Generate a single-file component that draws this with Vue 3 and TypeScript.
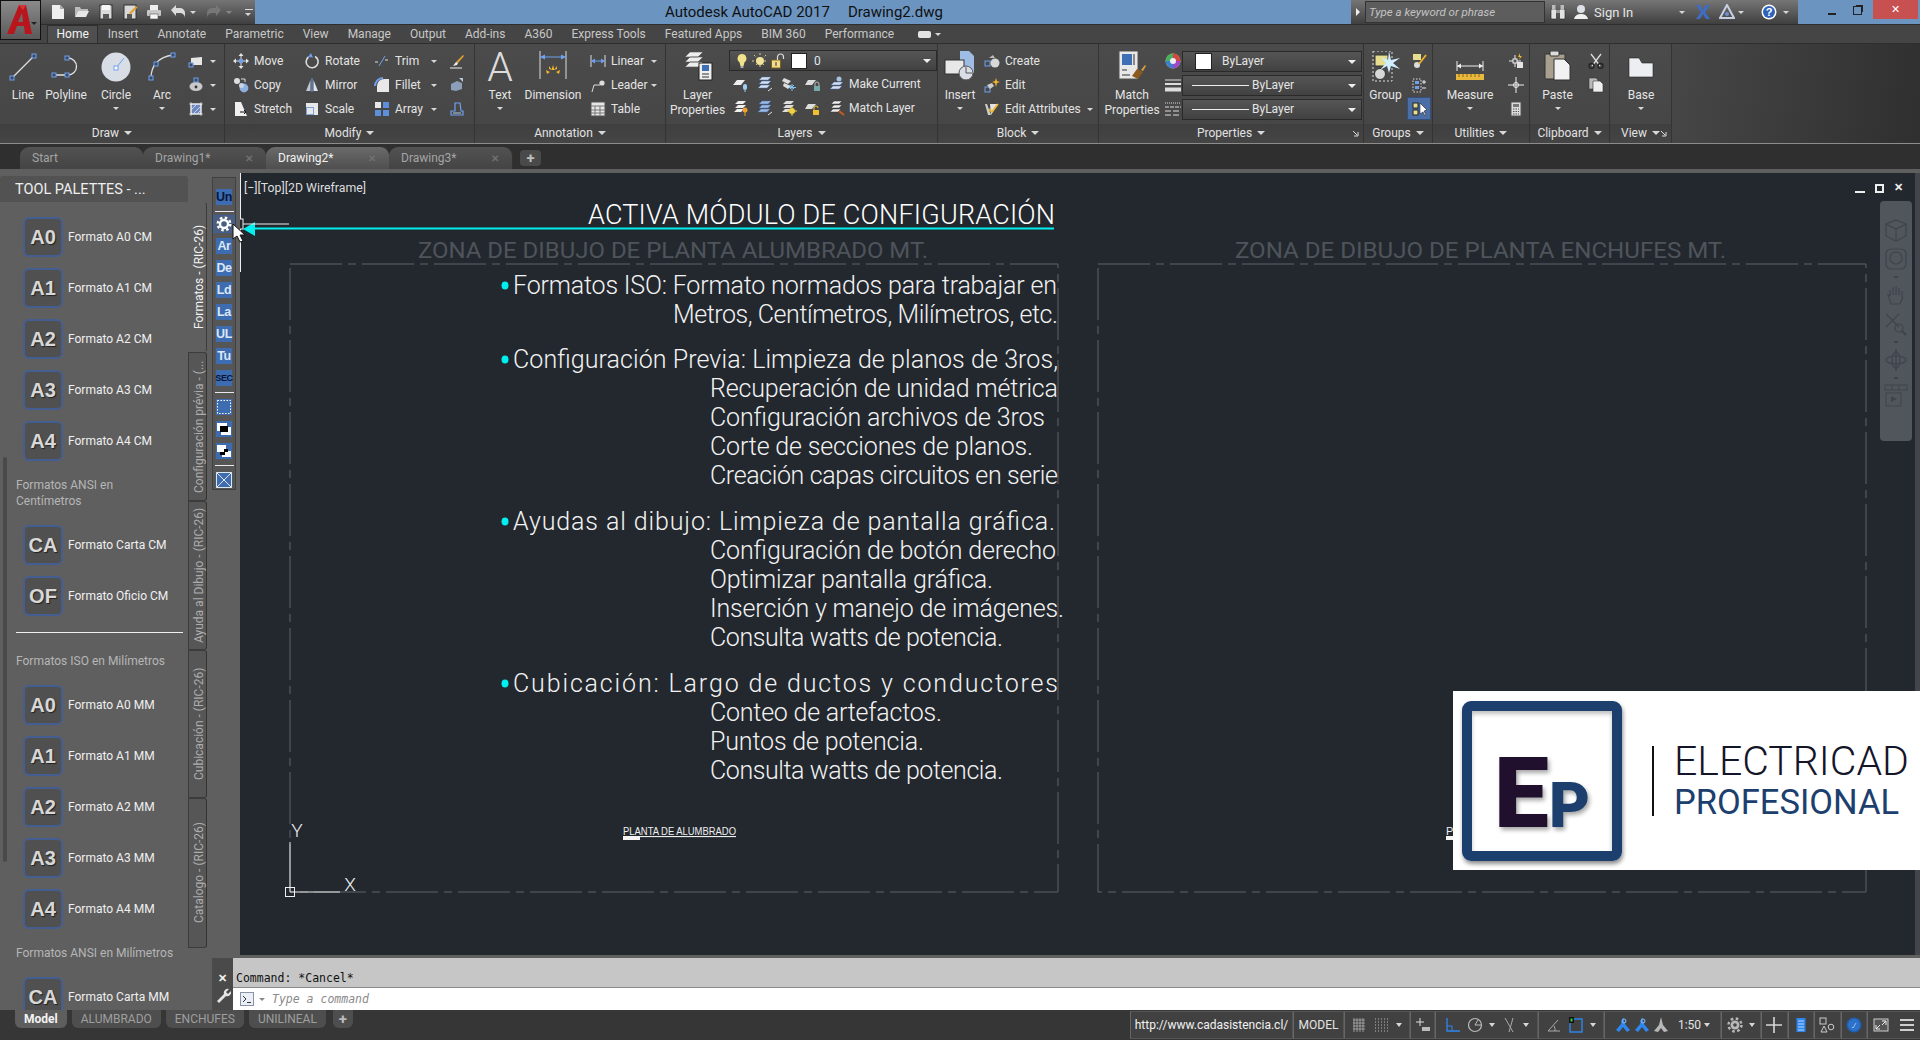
<script setup lang="ts">
import { h } from 'vue'

const grip = (x: number, y: number) =>
  `<rect x="${x - 2}" y="${y - 2}" width="4" height="4" fill="#3b4a63" stroke="#6fa0f0"/>`

// icon bodies, drawn in pixels: viewBox is always 0 0 s s
const icons: Record<string, string> = {
  line: `<path d="M5 27L27 5" stroke="#ddd" stroke-width="1.2"/>${grip(5, 27)}${grip(27, 5)}`,
  polyline: `<path d="M4 24H18A8.5 8.5 0 0 0 18 7" stroke="#e2e2e2" stroke-width="1.3"/>${grip(4, 24)}${grip(17, 24)}${grip(17, 7)}`,
  circle: `<circle cx="16" cy="16" r="14.5" fill="#d9dde6"/><path d="M16 17L24 7" stroke="#6fa0f0"/><rect x="14" y="15" width="4" height="4" fill="#fff" stroke="#6fa0f0"/>`,
  arc: `<path d="M5 27C5 15 12 6 27 4" stroke="#ddd" stroke-width="1.3"/>${grip(5, 27)}${grip(10, 13)}${grip(27, 4)}`,
  rect: `<path d="M3 5l11-1v8H3z" fill="#e6e6e6"/>${grip(3, 12)}`,
  ellipse: `<ellipse cx="8" cy="9.5" rx="6.5" ry="4.5" fill="#c9c9c9"/><circle cx="8" cy="10" r="1.4" fill="#333"/>${grip(8, 3)}`,
  hatch: `<rect x="3" y="3" width="10" height="10" fill="#6f87bd" stroke="#fff"/><path d="M3 9l6-6M5 13l8-8M9 13l4-4" stroke="#c7d3ee"/><path d="M1 3h14M1 13h14M3 1v14M13 1v14" stroke="#fff" stroke-width=".6"/>`,
  move: `<path d="M8 1.5v13M1.5 8h13" stroke="#ddd"/><path d="M8 0l2.5 3h-5zM8 16l2.5-3h-5zM0 8l3-2.5v5zM16 8l-3-2.5v5z" fill="#e6e6e6"/><rect x="6" y="6" width="4" height="4" fill="#6fa0f0"/>`,
  copy: `<circle cx="4" cy="4" r="3" fill="#ddd"/><path d="M8 2h4v3" stroke="#ddd"/><circle cx="11" cy="11" r="4.4" fill="#8fb0de"/><circle cx="8.5" cy="8.5" r="2.5" fill="#c9d4e6"/>`,
  rotate: `<path d="M4.5 4A6 6 0 1 0 11 3.5" stroke="#ddd" stroke-width="1.6"/><path d="M7 0L9 4.5 4 4z" fill="#6fa0f0"/>`,
  mirror: `<path d="M6.5 3v11H2z" fill="#bfc7d4"/><path d="M9.5 3v11H14z" fill="#dfe4ec"/><path d="M8 1v14" stroke="#6fa0f0"/>`,
  stretch: `<path d="M2 1h6l6 14H2z" fill="#f0f0f0"/><path d="M7 11h6M11 9l2 2-2 2" stroke="#111"/>`,
  scale: `<rect x="2" y="2" width="12" height="12" fill="#e8e8e8"/><rect x="2" y="6" width="8" height="8" fill="#7ea2d8"/><rect x="3" y="7" width="6" height="6" fill="#e8e8e8"/>`,
  trim: `<path d="M1 9h4M11 7h4" stroke="#ddd" stroke-dasharray="3 1"/><path d="M5 13L11 3" stroke="#6fa0f0"/>`,
  fillet: `<path d="M3 15V9a7 7 0 0 1 7-7h5v13z" fill="#e8e8e8"/><path d="M1 9a8 8 0 0 1 8-8" stroke="#6fa0f0" stroke-width="2"/>`,
  array: `<rect x="1" y="1" width="6" height="6" fill="#e8e8e8"/><rect x="9" y="1" width="6" height="6" fill="#5d90dc"/><rect x="1" y="9" width="6" height="6" fill="#5d90dc"/><rect x="9" y="9" width="6" height="6" fill="#5d90dc"/>`,
  erase: `<path d="M14 2L7 9l2 1 6-7z" fill="#e3a12f"/><path d="M7 9l-3 4 4-1 1-2z" fill="#efefef"/><path d="M1 15h12" stroke="#eee"/>`,
  explode: `<path d="M2 7l6-3 5 2-6 3zM2 7v6l5 1V9zM7 9l6-3v6l-6 2z" fill="#8c9fb8"/><path d="M10 1h4v4" fill="#bcc8d8"/>`,
  offset: `<path d="M2 14V10H6V2h5l1 8h2v4z" stroke="#6fa0f0" stroke-width="1.2"/><path d="M4 12h8" stroke="#bcd"/>`,
  dim: `<path d="M3 0v28M29 0v28" stroke="#ddd"/><path d="M3 6h26" stroke="#6fa0f0"/><path d="M3 6l5-2.5v5zM29 6l-5-2.5v5z" fill="#6fa0f0"/><path d="M16 14l1.5 5h-3zM9 19l4 2-3 2zM23 19l-4 2 3 2zM12 15l3 4-3-1zM20 15l-3 4 3-1z" fill="#f0b429"/>`,
  linear: `<path d="M1 2v12M15 2v12" stroke="#ddd"/><path d="M1 8h14" stroke="#6fa0f0"/><path d="M1 8l4-2.5v5zM15 8l-4-2.5v5z" fill="#6fa0f0"/>`,
  leader: `<path d="M2 15l2-7h6" stroke="#ddd"/><circle cx="12" cy="6" r="2.6" fill="#ddd"/>`,
  table: `<rect x="1" y="1" width="14" height="14" fill="#e6e6e6" stroke="#555"/><path d="M1 5h14M1 9h14M1 12h14M5 5v10M10 5v10" stroke="#777"/>`,
  layerprops: `<path d="M8 1l13 0-5 5H3zM8 6h13l-5 5H3zM8 11h13l-5 5H3z" fill="#eee" stroke="#555" stroke-width=".6"/><rect x="17" y="12" width="13" height="17" fill="#eee" stroke="#222"/><rect x="20" y="14" width="7" height="6" fill="#3e6eb4"/><path d="M20 23h7M20 26h7" stroke="#333"/>`,
  bulb: `<path d="M8 1a4.5 4.5 0 0 0-2.5 8.2L6.5 13h3l1-3.800A4.500 4.500 0 0 0 8 1z" fill="#f2e28a"/><rect x="6.500" y="13" width="3" height="2" fill="#aaa"/>`,
  sun: `<circle cx="8" cy="8" r="4" fill="#f3e39a"/><path d="M8 0v16M0 8h16M2 2l12 12M14 2L2 14" stroke="#d7cc8f" stroke-dasharray="2 10"/>`,
  lockopen: `<rect x="1.500" y="7" width="9" height="8" fill="#f3dd8a" stroke="#7a6520"/><path d="M7.500 7V4a3 3 0 0 1 6 0v2" stroke="#ddd" stroke-width="1.2"/><path d="M6 9v4" stroke="#333"/>`,
  lay1: `<path d="M4 4h8L8 9H0z" fill="#eee"/><rect x="10" y="8" width="4" height="6" rx="2" fill="#9fd0f2"/><path d="M12 14v2" stroke="#9fd0f2"/>`,
  lay2: `<path d="M5 1h9l-3 3H2zM5 5h9l-3 3H2zM4 9h9l-3 3H1z" fill="#d8deea" stroke="#3e6eb4" stroke-width=".5"/><path d="M15 12l-4 3" stroke="#ddd"/>`,
  lay3: `<path d="M3 2l7 3-3 3-6-3zM3 7l7 3-3 3-5-3z" fill="#ddd"/><path d="M11 8v7M8 11.500h7M9 9l4 4M13 9l-4 4" stroke="#7fc4f2"/>`,
  lay4: `<path d="M3 4h8L7 9H0z" fill="#ddd"/><rect x="9" y="10" width="6" height="5" fill="#7aa"/><path d="M10 10V8a2 2 0 0 1 4 0v2" stroke="#bbb"/>`,
  lay5: `<circle cx="10" cy="3" r="2.500" fill="#a9c1e2"/><path d="M5 6h9l-3 3H2zM4 10h9l-3 3H1z" fill="#d8deea" stroke="#3e6eb4" stroke-width=".5"/>`,
  lay6: `<path d="M5 1h8l-3 3H2zM5 5h8l-3 3H2zM4 9h7l-3 3H1z" fill="#eee"/><circle cx="12" cy="10" r="2.500" fill="#f0a030"/><path d="M12 12v4" stroke="#f0a030"/>`,
  lay7: `<path d="M5 1h9l-3 3H2zM5 5h9l-3 3H2zM4 9h9l-3 3H1z" fill="#9db8e0" stroke="#3e6eb4" stroke-width=".5"/><path d="M11 15l4-3" stroke="#ddd"/>`,
  lay8: `<path d="M5 1h8l-3 3H2zM5 5h8l-3 3H2zM4 9h6l-3 3H1z" fill="#ddd"/><circle cx="11" cy="11" r="3" fill="#f0d040"/><path d="M11 6v10M6 11h10" stroke="#f0d040"/>`,
  lay9: `<path d="M3 4h8L7 9H0z" fill="#ddd"/><rect x="8" y="10" width="6" height="5" fill="#f0c030"/><path d="M9 10V8a2 2 0 0 1 4 0" stroke="#f0c030"/>`,
  lay10: `<path d="M5 1h8l-3 3H2zM5 5h8l-3 3H2zM4 9h8l-3 3H1z" fill="#eee" stroke="#333" stroke-width=".5"/><path d="M10 11l5 4" stroke="#c85a20" stroke-width="2"/>`,
  insert: `<path d="M16 0h9l5 5v17H16z" fill="#9fbce4"/><rect x="1" y="9" width="19" height="14" fill="#e8e8e8" stroke="#333"/><circle cx="22" cy="22" r="7" fill="#d9dde6" stroke="#555"/><path d="M22 22v-6M22 22h6" stroke="#555"/>`,
  create: `<rect x="1" y="8" width="5" height="5" fill="none" stroke="#6fa0f0"/><path d="M5 5l4-3 2 3z" fill="#bbb"/><circle cx="11" cy="10" r="4.500" fill="#d7d7d7"/>`,
  edit: `<rect x="1" y="10" width="5" height="5" fill="none" stroke="#6fa0f0"/><path d="M3 8l5-2 2 3-4 3z" fill="#ccc"/><path d="M12 1l1 3 3 1-3 1-1 4-1-4-3-1 3-1z" fill="#f0b429"/>`,
  attr: `<path d="M1 3l3 11h3L3 3z" fill="#ccc"/><path d="M6 3h8L7 14z" fill="#e4e4e4"/><path d="M5 8l3 3 6-8" stroke="#f0b429" stroke-width="1.800"/>`,
  match: `<rect x="3" y="0" width="19" height="28" fill="#e8e8e8" stroke="#555"/><rect x="6" y="3" width="10" height="11" fill="#3e6eb4"/><path d="M18 3v11" stroke="#888" stroke-width="2"/><path d="M6 19h5M6 24h8" stroke="#333"/><path d="M16 25l5-7 6 3-5 7z" fill="#8a5a20"/><path d="M25 19l4-5 1 1-3 5z" fill="#d8a040"/>`,
  color: `<circle cx="8" cy="8" r="7.500" fill="#c9c94a"/><path d="M8 8V.5A7.500 7.500 0 0 1 15.500 8z" fill="#d64545"/><path d="M8 8h7.500A7.500 7.500 0 0 1 8 15.500z" fill="#9a4ac9"/><path d="M8 8v7.500A7.500 7.500 0 0 1 .5 8z" fill="#3f7fd0"/><path d="M8 8H.5A7.500 7.500 0 0 1 8 .5z" fill="#48b060"/><circle cx="8" cy="8" r="3" fill="#eee"/>`,
  lweight: `<path d="M0 3h16" stroke="#ddd"/><path d="M0 7h16" stroke="#ddd" stroke-width="2"/><path d="M0 12.500h16" stroke="#ddd" stroke-width="4"/>`,
  ltype: `<path d="M0 2h16" stroke="#ddd" stroke-dasharray="1 1"/><path d="M0 6h16" stroke="#ddd" stroke-dasharray="4 1"/><path d="M0 10h16M0 14h16" stroke="#ddd" stroke-dasharray="6 2"/>`,
  group: `<rect x="3" y="0" width="19" height="30" fill="none" stroke="#ddd" stroke-dasharray="2 2"/><rect x="5" y="4" width="13" height="11" fill="#e7dd8e" stroke="#333"/><circle cx="10" cy="23" r="5.500" fill="#d7d7d7" stroke="#333"/><path d="M19 0l2 9 9-2-7 5 7 6-9-3-2 7-2-7-7 4 6-7-5-6 7 3z" fill="#cfeeff"/>`,
  grpedit: `<rect x="2" y="1" width="8" height="6" fill="#e7dd8e"/><circle cx="6" cy="12" r="3" fill="#ddd"/><path d="M8 11l7-9" stroke="#f0b429" stroke-width="1.800"/>`,
  grpadd: `<rect x="2" y="2" width="8" height="13" fill="none" stroke="#ddd" stroke-dasharray="1.500 1.500"/><rect x="4" y="4" width="4" height="3" fill="#6fa0f0"/><rect x="4" y="9" width="4" height="3" fill="#6fa0f0"/><path d="M11 5h4M13 3v4M11 11h4" stroke="#eee"/>`,
  grpsel: `<rect x="2" y="2" width="5" height="5" fill="#e7dd8e" stroke="#222"/><rect x="2" y="9" width="5" height="5" fill="#e7dd8e" stroke="#222"/><path d="M9 2v11l3-2 2 4 1-1-2-4 3-1z" fill="#fff" stroke="#222" stroke-width=".6"/>`,
  measure: `<g transform="translate(0 4)"><path d="M3 6v10M29 6v10" stroke="#eee"/><path d="M3 11h26" stroke="#eee"/><path d="M3 11l4-2.500v5zM29 11l-4-2.500v5z" fill="#eee"/><rect x="2" y="19" width="28" height="6" fill="#e8b93c"/><path d="M5 19v3M9 19v3M13 19v3M17 19v3M21 19v3M25 19v3" stroke="#8a6a1a"/></g>`,
  idpoint: `<path d="M7 2v12M1 8h12" stroke="#eee"/><rect x="5" y="6" width="4" height="4" fill="#555" stroke="#eee"/><path d="M12 0l-2 4h2l-1 3 3-4h-2z" fill="#f0b429"/><rect x="9" y="9" width="6" height="6" fill="#e4e4e4"/>`,
  cross: `<path d="M8 0v16M0 8h16" stroke="#eee"/><circle cx="8" cy="8" r="2.500" stroke="#eee"/>`,
  calc: `<rect x="3" y="1" width="10" height="14" fill="#ddd" stroke="#555"/><rect x="5" y="3" width="6" height="3" fill="#777"/><path d="M5 8h6M5 10.500h6M5 13h6" stroke="#555" stroke-dasharray="1.500 1"/>`,
  paste: `<rect x="3" y="3" width="20" height="25" rx="1" fill="#a89f8f" stroke="#333"/><rect x="8" y="0" width="9" height="5" rx="1" fill="#ddd" stroke="#333"/><path d="M12 8h10l6 6v15H12z" fill="#f2f2f2" stroke="#333"/>`,
  cut: `<path d="M3 1l9 12M13 1L4 13" stroke="#ddd" stroke-width="1.300"/><circle cx="3.500" cy="13" r="2.500" stroke="#222" stroke-width="1.300"/><circle cx="12.500" cy="13" r="2.500" stroke="#222" stroke-width="1.300"/>`,
  clipcopy: `<path d="M1 1h7l2 2v9H1z" fill="#bbb" stroke="#333" stroke-width=".6"/><path d="M5 4h7l3 3v8H5z" fill="#eee" stroke="#333" stroke-width=".6"/>`,
  base: `<path d="M4 7h10l3 5h11v14H4z" fill="#eceef2" stroke="#222" stroke-width=".6"/>`,
  newf: `<path d="M2 1h8l4 4v10H2z" fill="#eee"/><path d="M10 1v4h4" fill="#aaa"/>`,
  open: `<path d="M1 13V3h5l1 2h7v2H4z" fill="#bbb"/><path d="M1 13l3-6h11l-3 6z" fill="#e6e6e6"/>`,
  save: `<rect x="2" y="1" width="12" height="14" fill="#d9d9d9" stroke="#333"/><rect x="4" y="1" width="8" height="5" fill="#f7f7f7"/><rect x="5" y="10" width="6" height="5" fill="#555"/>`,
  saveas: `<rect x="2" y="1" width="12" height="14" fill="#d9d9d9" stroke="#333"/><rect x="5" y="10" width="5" height="5" fill="#555"/><path d="M7 9l7-7 1.500 1.500-7 7z" fill="#e3a12f"/>`,
  print: `<rect x="4" y="1" width="8" height="5" fill="#eee"/><rect x="1" y="6" width="14" height="6" rx="1" fill="#c9c9c9"/><rect x="4" y="10" width="8" height="5" fill="#f5f5f5" stroke="#555" stroke-width=".6"/>`,
  undo: `<path d="M1 6l5-5v3h4a5 5 0 0 1 5 5v5a5 5 0 0 0-5-5H6v3z" fill="#dcdcdc"/>`,
  redo: `<path d="M15 6l-5-5v3H6a5 5 0 0 0-5 5v5a5 5 0 0 1 5-5h4v3z" fill="#777"/>`,
  binoc: `<rect x="1" y="5" width="5.500" height="10" rx="1" fill="#e2e2e2" stroke="#222" stroke-width=".6"/><rect x="9.500" y="5" width="5.500" height="10" rx="1" fill="#e2e2e2" stroke="#222" stroke-width=".6"/><rect x="2" y="1" width="3.500" height="4" fill="#bbb"/><rect x="10.500" y="1" width="3.500" height="4" fill="#bbb"/><rect x="6" y="6" width="4" height="3" fill="#999"/>`,
  user: `<circle cx="8" cy="5" r="4" fill="#dde0e6"/><path d="M1 15c1-4 4-5 7-5s6 1 7 5z" fill="#f0f0f0"/>`,
  xlogo: `<path d="M1 1h4l3 5 3-5h4l-5 7 5 7h-4l-3-5-3 5H1l5-7z" fill="#3f6cc4"/>`,
  a360: `<path d="M8 1L1 14h14z" stroke="#c6d0e2" stroke-width="2"/><circle cx="8" cy="10" r="2" fill="#6f8fd0"/>`,
  help: `<circle cx="8" cy="8" r="7.500" fill="#fff"/><circle cx="8" cy="8" r="6" fill="#2f63b8"/><text x="8" y="12" text-anchor="middle" font-family="Liberation Sans" font-size="11" font-weight="700" fill="#fff">?</text>`,
  grid: `<path d="M2 1v14M5 1v14M8 1v14M11 1v14M1 3h12M1 6h12M1 9h12M1 12h12" stroke="#bbb" stroke-width=".7"/>`,
  snap: `<path d="M1 2h14M1 5h14M1 8h14M1 11h14M1 14h14" stroke="#bbb" stroke-dasharray="1 2"/>`,
  dyn: `<path d="M5 1v8M1 5h8" stroke="#ddd"/><rect x="7" y="10" width="8" height="4" fill="#bbb"/>`,
  ortho: `<path d="M2 1v13h13" stroke="#2e86ee" stroke-width="1.300"/><path d="M2 9h5v5" stroke="#2e86ee"/>`,
  polar: `<circle cx="8" cy="8" r="6.500" stroke="#bbb" stroke-width="1.200"/><path d="M8 8h7M8 8l3-5" stroke="#bbb"/>`,
  iso: `<path d="M4 1l8 14M12 1L8 15" stroke="#aaa"/>`,
  osnap: `<path d="M2 14L12 3M2 14h12" stroke="#aaa"/><path d="M9 14a7 7 0 0 0-1-5" stroke="#aaa"/>`,
  dwg: `<rect x="2" y="2" width="12" height="13" stroke="#2e86ee" stroke-width="1.400"/><rect x="1" y="0" width="5" height="6" fill="#111"/><rect x="2.500" y="1.500" width="2" height="3" fill="#35d04a"/>`,
  anno: `<path d="M8 0L6 7 1 13l3 2 4-5 4 5 3-2-5-6z" fill="#2e86ee"/><circle cx="9" cy="4" r="2" stroke="#8cc0ff"/>`,
  annog: `<path d="M8 0L6 8 1 14l4 1 3-4 3 4 4-1-5-6z" fill="#b8b8b8"/>`,
  gear: `<circle cx="8" cy="8" r="4.500" fill="#b8b8b8"/><circle cx="8" cy="8" r="6.500" stroke="#b8b8b8" stroke-width="2.400" stroke-dasharray="2.600 2.500"/><circle cx="8" cy="8" r="1.800" fill="#444"/>`,
  plus: `<path d="M8 0v16M0 8h16" stroke="#d8d8d8" stroke-width="1.600"/>`,
  units: `<rect x="3.500" y="1" width="9" height="14" fill="#2e86ee"/><path d="M5 4h6M5 7h6M5 10h6M5 13h6" stroke="#bcd9ff"/>`,
  isol: `<rect x="1" y="1" width="6" height="6" stroke="#ccc"/><circle cx="12" cy="10" r="2.800" stroke="#ccc"/><path d="M5 9l3 6H2z" stroke="#ccc"/>`,
  check: `<circle cx="8" cy="8" r="7.500" fill="#1f5fae"/><circle cx="8" cy="8" r="6" fill="#2d72c8"/><path d="M6 10l1 1 3-5" stroke="#8fc0ff"/>`,
  full: `<rect x="1" y="2" width="14" height="12" fill="#555" stroke="#ccc"/><path d="M9 4h4v4M13 4L9 8M3 12V8M3 12h4M3 12l4-4" stroke="#eee"/>`,
  menu: `<path d="M1 3h14M1 8h14M1 13h14" stroke="#cfcfcf" stroke-width="2"/>`,
  wrench: `<path d="M2 14l7-7a4 4 0 0 1 5-5l-3 3 2 2 3-3a4 4 0 0 1-5 5l-7 7z" fill="#e4e4e4"/>`,
  prompt: `<rect x=".5" y=".5" width="13" height="13" fill="#eaeef6" stroke="#8a94a6"/><path d="M3 4l3 3-3 3M7 10.500h4" stroke="#333"/>`,
  tgear: `<circle cx="8" cy="8" r="4" stroke="#fff" stroke-width="2.400"/><circle cx="8" cy="8" r="6.300" stroke="#fff" stroke-width="2.400" stroke-dasharray="2.500 2.450"/>`,
  dots: `<rect width="16" height="16" fill="#3d6cb0"/><rect x="1.500" y="1.500" width="13" height="13" stroke="#fff" stroke-dasharray="1.500 1.500"/>`,
  bw1: `<rect width="16" height="16" fill="#3d6cb0"/><rect x="1" y="2" width="10" height="8" fill="#fff"/><rect x="5" y="6" width="10" height="8" fill="#fff"/><rect x="4" y="5" width="8" height="6" fill="#000"/>`,
  bw2: `<rect width="16" height="16" fill="#3d6cb0"/><rect x="1" y="2" width="9" height="7" fill="#fff"/><rect x="6" y="8" width="9" height="6" fill="#fff"/><path d="M4 9h4V6h4v3H9v3H4z" fill="#000"/>`,
  boxx: `<rect width="16" height="16" fill="#3d6cb0"/><path d="M.5.5h15v15H.5zM.5.5l15 15M15.500.5l-15 15" stroke="#dfe6f0"/>`,
  nav1: `<path d="M12 2l10 4v12l-10 5-10-5V6zM2 6l10 5 10-5M12 11v12" stroke="#3f444b" stroke-width="1.200"/>`,
  nav2: `<rect x="2" y="2" width="20" height="20" rx="5" stroke="#3f444b" stroke-width="1.200"/><circle cx="12" cy="11" r="6" stroke="#3f444b" stroke-width="1.200"/>`,
  nav3: `<path d="M6 13V7M9 12V4M12 12V3M15 12V5M18 14V8M6 13l-2-1 3 9h9l3-7" stroke="#3f444b" stroke-width="1.200"/>`,
  nav4: `<path d="M2 2l13 13M15 2L2 15" stroke="#3f444b" stroke-width="1.200"/><circle cx="15" cy="16" r="4" stroke="#3f444b" stroke-width="1.200"/><path d="M18 19l4 4" stroke="#3f444b" stroke-width="2"/>`,
  nav5: `<path d="M12 1v22" stroke="#3f444b" stroke-width="1.400"/><ellipse cx="12" cy="12" rx="10" ry="4" stroke="#3f444b" stroke-width="1.200"/><ellipse cx="12" cy="12" rx="4" ry="8" stroke="#3f444b" stroke-width="1.200"/>`,
  nav6: `<rect x="1" y="1" width="22" height="5" stroke="#3f444b"/><path d="M8 1v5M15 1v5" stroke="#3f444b"/><rect x="2" y="9" width="15" height="13" stroke="#3f444b"/><path d="M7 12l6 3-6 3z" fill="#3f444b"/>`,
}

const Ic = (props: { n: string; s?: number | string }) => {
  const s = Number(props.s ?? 16)
  return h('svg', { width: s, height: s, viewBox: `0 0 ${s} ${s}`, fill: 'none', class: 'ic', innerHTML: icons[props.n] })
}
Ic.props = ['n', 's']

interface Row { i: string; l?: string; c?: boolean; on?: boolean }
interface Item {
  kind: 'big' | 'col' | 'layers' | 'props'
  w: number
  i?: string
  glyph?: string
  l?: string[]
  c?: boolean
  pad?: number
  rpad?: number
  rows?: Row[]
}
interface Panel { name: string; w: number; launcher?: boolean; items: Item[] }

const panels: Panel[] = [
  {
    name: 'Draw', w: 225,
    items: [
      { kind: 'big', w: 46, i: 'line', l: ['Line'] },
      { kind: 'big', w: 40, i: 'polyline', l: ['Polyline'] },
      { kind: 'big', w: 60, i: 'circle', l: ['Circle'], c: true },
      { kind: 'big', w: 32, i: 'arc', l: ['Arc'], c: true },
      { kind: 'col', w: 47, pad: 10, rpad: 9, rows: [{ i: 'rect', c: true }, { i: 'ellipse', c: true }, { i: 'hatch', c: true }] },
    ],
  },
  {
    name: 'Modify', w: 250,
    items: [
      { kind: 'col', w: 79, pad: 8, rows: [{ i: 'move', l: 'Move' }, { i: 'copy', l: 'Copy' }, { i: 'stretch', l: 'Stretch' }] },
      { kind: 'col', w: 70, rows: [{ i: 'rotate', l: 'Rotate' }, { i: 'mirror', l: 'Mirror' }, { i: 'scale', l: 'Scale' }] },
      { kind: 'col', w: 75, rpad: 12, rows: [{ i: 'trim', l: 'Trim', c: true }, { i: 'fillet', l: 'Fillet', c: true }, { i: 'array', l: 'Array', c: true }] },
      { kind: 'col', w: 26, rows: [{ i: 'erase' }, { i: 'explode' }, { i: 'offset' }] },
    ],
  },
  {
    name: 'Annotation', w: 191,
    items: [
      { kind: 'big', w: 50, glyph: 'A', l: ['Text'], c: true },
      { kind: 'big', w: 56, i: 'dim', l: ['Dimension'] },
      { kind: 'col', w: 85, pad: 9, rpad: 9, rows: [{ i: 'linear', l: 'Linear', c: true }, { i: 'leader', l: 'Leader', c: true }, { i: 'table', l: 'Table' }] },
    ],
  },
  {
    name: 'Layers', w: 272,
    items: [
      { kind: 'big', w: 63, i: 'layerprops', l: ['Layer', 'Properties'] },
      { kind: 'layers', w: 209 },
    ],
  },
  {
    name: 'Block', w: 161,
    items: [
      { kind: 'big', w: 44, i: 'insert', l: ['Insert'], c: true },
      { kind: 'col', w: 117, pad: 2, rpad: 6, rows: [{ i: 'create', l: 'Create' }, { i: 'edit', l: 'Edit' }, { i: 'attr', l: 'Edit Attributes', c: true }] },
    ],
  },
  {
    name: 'Properties', w: 265, launcher: true,
    items: [
      { kind: 'big', w: 66, i: 'match', l: ['Match', 'Properties'] },
      { kind: 'props', w: 199 },
    ],
  },
  {
    name: 'Groups', w: 69,
    items: [
      { kind: 'big', w: 43, i: 'group', l: ['Group'] },
      { kind: 'col', w: 26, pad: 4, rows: [{ i: 'grpedit' }, { i: 'grpadd' }, { i: 'grpsel', on: true }] },
    ],
  },
  {
    name: 'Utilities', w: 97,
    items: [
      { kind: 'big', w: 74, i: 'measure', l: ['Measure'], c: true },
      { kind: 'col', w: 23, pad: 1, rows: [{ i: 'idpoint' }, { i: 'cross' }, { i: 'calc' }] },
    ],
  },
  {
    name: 'Clipboard', w: 80,
    items: [
      { kind: 'big', w: 55, i: 'paste', l: ['Paste'], c: true },
      { kind: 'col', w: 25, pad: 3, rows: [{ i: 'cut' }, { i: 'clipcopy' }] },
    ],
  },
  {
    name: 'View', w: 62, launcher: true,
    items: [{ kind: 'big', w: 62, i: 'base', l: ['Base'], c: true }],
  },
]

const layerRows = [
  { icons: ['lay1', 'lay2', 'lay3', 'lay4', 'lay5'], label: 'Make Current' },
  { icons: ['lay6', 'lay7', 'lay8', 'lay9', 'lay10'], label: 'Match Layer' },
]

const ribbonTabs = ['Home', 'Insert', 'Annotate', 'Parametric', 'View', 'Manage', 'Output', 'Add-ins', 'A360', 'Express Tools', 'Featured Apps', 'BIM 360', 'Performance']
const fileTabs = [
  { name: 'Start', close: false, on: false },
  { name: 'Drawing1*', close: true, on: false },
  { name: 'Drawing2*', close: true, on: true },
  { name: 'Drawing3*', close: true, on: false },
]

const paletteTabs = [
  { t: 'Formatos - (RIC-26)', h: 150, on: true },
  { t: 'Configuración prévia - (...', h: 149, on: false },
  { t: 'Ayuda al Dibujo - (RIC-26)', h: 149, on: false },
  { t: 'Cubicación - (RIC-26)', h: 148, on: false },
  { t: 'Catalogo - (RIC-26)', h: 150, on: false },
]

const cm = [['A0', 'Formato A0 CM'], ['A1', 'Formato A1 CM'], ['A2', 'Formato A2 CM'], ['A3', 'Formato A3 CM'], ['A4', 'Formato A4 CM']]
const ansiCm = [['CA', 'Formato Carta CM'], ['OF', 'Formato Oficio CM']]
const mm = [['A0', 'Formato A0 MM'], ['A1', 'Formato A1 MM'], ['A2', 'Formato A2 MM'], ['A3', 'Formato A3 MM'], ['A4', 'Formato A4 MM']]

interface StripItem { t?: string; dark?: boolean; tiny?: boolean; sep?: boolean; gear?: boolean; box?: string }
const strip: StripItem[] = [
  { t: 'Un', dark: true }, { sep: true }, { gear: true }, { t: 'Ar' }, { t: 'De' }, { t: 'Ld' }, { t: 'La' }, { t: 'UL' }, { t: 'Tu' },
  { t: 'SEC', dark: true, tiny: true }, { sep: true }, { box: 'dots' }, { box: 'bw1' }, { box: 'bw2' }, { sep: true }, { box: 'boxx' },
]

// lines of the note written in the drawing: x, baseline and width as placed in the DWG
const note = [
  { t: 'Formatos ISO: Formato normados para trabajar en', x: 513, y: 294, w: 544, dot: true },
  { t: 'Metros, Centímetros, Milímetros, etc.', x: 673, y: 323, w: 385 },
  { t: 'Configuración Previa: Limpieza de planos de 3ros,', x: 513, y: 368, w: 545, dot: true },
  { t: 'Recuperación de unidad métrica', x: 710, y: 397, w: 348 },
  { t: 'Configuración archivos de 3ros', x: 710, y: 426, w: 335 },
  { t: 'Corte de secciones de planos.', x: 710, y: 455, w: 323 },
  { t: 'Creación capas circuitos en serie', x: 710, y: 484, w: 348 },
  { t: 'Ayudas al dibujo: Limpieza de pantalla gráfica.', x: 513, y: 530, w: 542, dot: true },
  { t: 'Configuración de botón derecho', x: 710, y: 559, w: 346 },
  { t: 'Optimizar pantalla gráfica.', x: 710, y: 588, w: 283 },
  { t: 'Inserción y manejo de imágenes.', x: 710, y: 617, w: 354 },
  { t: 'Consulta watts de potencia.', x: 710, y: 646, w: 293 },
  { t: 'Cubicación: Largo de ductos y conductores', x: 513, y: 692, w: 545, dot: true },
  { t: 'Conteo de artefactos.', x: 710, y: 721, w: 232 },
  { t: 'Puntos de potencia.', x: 710, y: 750, w: 214 },
  { t: 'Consulta watts de potencia.', x: 710, y: 779, w: 293 },
]
</script>

<template>
  <div class="app">
    <!-- Title bar -->
    <header class="titlebar">
      <div class="qat">
        <Ic n="newf" /><Ic n="open" /><Ic n="save" /><Ic n="saveas" /><Ic n="print" />
        <span class="qat-g"><Ic n="undo" /><i class="caret" /></span>
        <span class="qat-g"><Ic n="redo" /><i class="caret dim" /></span>
        <span class="qat-menu"><i class="caret" /></span>
      </div>
      <div class="title-text"><span>Autodesk AutoCAD 2017</span><span>Drawing2.dwg</span></div>
      <div class="infocenter">
        <i class="ic-play" />
        <div class="search">Type a keyword or phrase</div>
        <Ic n="binoc" class="ml-binoc" />
        <Ic n="user" class="ml-user" />
        <span class="signin">Sign In</span>
        <i class="caret signin-caret" />
        <Ic n="xlogo" class="ml-x" />
        <Ic n="a360" class="ml-a" />
        <i class="caret" />
        <Ic n="help" class="ml-help" />
        <i class="caret" />
      </div>
      <div class="winctl">
        <span class="w-min" />
        <span class="w-max" />
        <span class="w-close">✕</span>
      </div>
      <div class="appbtn">
        <svg width="30" height="34" viewBox="0 0 30 34">
          <path d="M2 31L14 2h7l6 29h-7l-1-8h-7l-3 8z" fill="#b8161c" />
          <path d="M13 19h5l-1-9z" fill="#6b6b6b" />
          <path d="M14 2h7l-3 5z" fill="#d8353a" />
        </svg>
        <i class="caret app-caret" />
      </div>
    </header>

    <!-- Ribbon -->
    <nav class="rtabs">
      <span v-for="t in ribbonTabs" :key="t" class="rtab" :class="{ on: t === 'Home' }">{{ t }}</span>
      <span class="rtab-view"><i class="view-pill" /><i class="caret" /></span>
    </nav>
    <section class="ribbon">
      <div v-for="p in panels" :key="p.name" class="panel" :style="{ width: p.w + 'px' }">
        <div class="panel-body">
          <template v-for="(it, n) in p.items" :key="n">
            <div v-if="it.kind === 'big'" class="big" :style="{ width: it.w + 'px' }">
              <span v-if="it.glyph" class="big-glyph">{{ it.glyph }}</span>
              <Ic v-else :n="it.i!" s="32" />
              <div class="big-label">
                <div v-for="l in it.l" :key="l">{{ l }}</div>
              </div>
              <i v-if="it.c" class="caret big-caret" />
            </div>
            <div
              v-else-if="it.kind === 'col'"
              class="col"
              :style="{ width: it.w + 'px', paddingLeft: (it.pad ?? 0) + 'px', paddingRight: (it.rpad ?? 0) + 'px' }"
            >
              <div v-for="r in it.rows" :key="r.i" class="row" :class="{ active: r.on }">
                <Ic :n="r.i" />
                <span v-if="r.l" class="row-label">{{ r.l }}</span>
                <i v-if="r.c" class="caret row-caret" />
              </div>
            </div>
            <div v-else-if="it.kind === 'layers'" class="layers">
              <div class="combo layer-combo">
                <Ic n="bulb" /><Ic n="sun" /><Ic n="lockopen" />
                <span class="swatch" />
                <span class="layer-name">0</span>
                <i class="caret combo-caret" />
              </div>
              <div v-for="lr in layerRows" :key="lr.label" class="layer-row">
                <Ic v-for="ic in lr.icons" :key="ic" :n="ic" />
                <span class="row-label">{{ lr.label }}</span>
              </div>
            </div>
            <div v-else class="props">
              <div class="prop-row">
                <Ic n="color" />
                <div class="combo"><span class="swatch swatch-lg" /><span class="bylayer">ByLayer</span><i class="caret combo-caret" /></div>
              </div>
              <div class="prop-row">
                <Ic n="lweight" />
                <div class="combo"><span class="lt-line" /><span>ByLayer</span><i class="caret combo-caret" /></div>
              </div>
              <div class="prop-row">
                <Ic n="ltype" />
                <div class="combo"><span class="lt-line" /><span>ByLayer</span><i class="caret combo-caret" /></div>
              </div>
            </div>
          </template>
        </div>
        <div class="panel-title">
          <span>{{ p.name }}</span><i class="caret title-caret" />
          <svg v-if="p.launcher" class="launcher" width="7" height="7" viewBox="0 0 7 7"><path d="M1 1l4 4M6 2v4H2" stroke="#ddd" fill="none" /></svg>
        </div>
      </div>
      <div class="ribbon-rest" />
    </section>

    <!-- File tabs -->
    <nav class="ftabs">
      <div v-for="t in fileTabs" :key="t.name" class="ftab" :class="{ on: t.on }">
        <span>{{ t.name }}</span>
        <b v-if="t.close" class="ftab-x">✕</b>
      </div>
      <div class="ftab-add">+</div>
    </nav>

    <main class="workspace">
      <!-- Tool palette -->
      <aside class="palette">
        <div class="pal-main">
          <div class="pal-head">TOOL PALETTES - ...</div>
          <div class="pal-list">
            <div v-for="[a, b] in cm" :key="b" class="tool"><span class="tile">{{ a }}</span>{{ b }}</div>
            <div class="cap cap-two">Formatos ANSI en<br />Centímetros</div>
            <div v-for="[a, b] in ansiCm" :key="b" class="tool"><span class="tile">{{ a }}</span>{{ b }}</div>
            <div class="pal-rule" />
            <div class="cap cap-iso">Formatos ISO en Milímetros</div>
            <div v-for="[a, b] in mm" :key="b" class="tool"><span class="tile">{{ a }}</span>{{ b }}</div>
            <div class="cap">Formatos ANSI en Milímetros</div>
            <div class="tool"><span class="tile">CA</span>Formato Carta MM</div>
          </div>
        </div>
        <div class="pal-tabs">
          <div v-for="t in paletteTabs" :key="t.t" class="vtab" :class="{ on: t.on }" :style="{ height: t.h + 'px' }">
            <span>{{ t.t }}</span>
          </div>
        </div>
        <div class="pal-scroll" />
      </aside>

      <div class="work-right">
        <div class="work-top">
          <div class="strip-wrap">
            <div class="strip">
              <div class="strip-handle" />
              <template v-for="(s, n) in strip" :key="n">
                <div v-if="s.sep" class="strip-sep" />
                <div v-else-if="s.gear" class="strip-btn gear"><Ic n="tgear" /></div>
                <div v-else class="strip-btn">
                  <span v-if="s.t" class="strip-t" :class="{ dark: s.dark, tiny: s.tiny }">{{ s.t }}</span>
                  <Ic v-else :n="s.box!" />
                </div>
              </template>
            </div>
          </div>

          <!-- Drawing area -->
          <div class="canvas">
            <svg class="drawing" width="1675" height="782" viewBox="240 173 1675 782">
              <g fill="none" stroke="#5d6269">
                <rect x="290" y="264" width="768" height="628" stroke-dasharray="52 6 8 6" />
                <rect x="1098" y="264" width="768" height="628" stroke-dasharray="52 6 8 6" />
              </g>
              <g font-family="Roboto" font-size="22" fill="#4f545b">
                <text x="418" y="258" textLength="510" lengthAdjust="spacingAndGlyphs">ZONA DE DIBUJO DE PLANTA ALUMBRADO MT.</text>
                <text x="1235" y="258" textLength="491" lengthAdjust="spacingAndGlyphs">ZONA DE DIBUJO DE PLANTA ENCHUFES MT.</text>
              </g>
              <text x="588" y="224" font-family="Roboto" font-size="27" font-weight="300" fill="#fff" textLength="467">ACTIVA MÓDULO DE CONFIGURACIÓN</text>
              <path d="M250 228.500H1054" stroke="#00f0f0" stroke-width="2" />
              <path d="M243 229l12-7v14z" fill="#00f0f0" />
              <path d="M240.500 173V272M243 224H289" stroke="#eee" />
              <rect x="238" y="219" width="5" height="10" fill="#23282f" stroke="#eee" />
              <g font-family="Roboto" font-size="25" font-weight="300" fill="#f2f2f2">
                <text v-for="l in note" :key="l.t + l.y" :x="l.x" :y="l.y" :textLength="l.w" lengthAdjust="spacing">{{ l.t }}</text>
              </g>
              <g fill="#00f0f0">
                <ellipse v-for="l in note.filter((v) => v.dot)" :key="l.y" cx="505" :cy="l.y - 8.5" rx="3.500" ry="4" />
              </g>
              <path d="M290 842V892H340" stroke="#eee" fill="none" />
              <rect x="285.500" y="887.500" width="9" height="9" fill="none" stroke="#eee" />
              <g font-family="Roboto" font-size="19" font-weight="300" fill="#eee" text-anchor="middle">
                <text x="297" y="837">Y</text>
                <text x="350" y="891">X</text>
              </g>
              <g font-family="Liberation Sans" font-size="11" fill="#eee">
                <text x="623" y="835" textLength="113" lengthAdjust="spacingAndGlyphs" text-decoration="underline">PLANTA DE ALUMBRADO</text>
                <text x="1446" y="835">P</text>
              </g>
              <rect x="623" y="836" width="17" height="4" fill="#f4f4f4" />
              <rect x="1446" y="836" width="7" height="4" fill="#f4f4f4" />
            </svg>

            <div class="vp-label">[−][Top][2D Wireframe]</div>
            <div class="vp-ctl">
              <span class="vp-min" /><span class="vp-max" /><span class="vp-close">✕</span>
            </div>
            <div class="navbar">
              <Ic n="nav1" s="24" /><Ic n="nav2" s="24" /><i class="nav-dot" /><Ic n="nav3" s="24" /><Ic n="nav4" s="24" /><i class="nav-dot" /><Ic n="nav5" s="24" /><i class="nav-dot" /><Ic n="nav6" s="24" />
            </div>
            <div class="canvas-edge" />

            <div class="logo">
              <div class="logo-mark"><span class="logo-e">E</span><span class="logo-p">P</span></div>
              <div class="logo-div" />
              <div class="logo-text">
                <div class="logo-l1">ELECTRICAD</div>
                <div class="logo-l2">PROFESIONAL</div>
              </div>
            </div>
          </div>

          <svg class="cursor" width="14" height="20" viewBox="0 0 14 20">
            <path d="M1 1v15l4-3 3 6 3-1-3-6h5z" fill="#fff" stroke="#111" />
          </svg>
        </div>

        <!-- Command line -->
        <div class="cmd">
          <div class="cmd-side">
            <i class="cmd-handle" />
            <span class="cmd-x">✕</span>
            <Ic n="wrench" />
          </div>
          <div class="cmd-main">
            <div class="cmd-hist">Command: *Cancel*</div>
            <div class="cmd-input">
              <Ic n="prompt" s="14" />
              <i class="caret cmd-caret" />
              <span>Type a command</span>
            </div>
          </div>
        </div>
      </div>
    </main>

    <!-- Layout tabs and status bar -->
    <footer class="bottom">
      <div class="ltabs">
        <span class="ltab on">Model</span>
        <span class="ltab">ALUMBRADO</span>
        <span class="ltab">ENCHUFES</span>
        <span class="ltab">UNILINEAL</span>
        <span class="ltab-add">+</span>
      </div>
      <div class="status">
        <div class="st st-url">http://www.cadasistencia.cl/</div>
        <div class="st st-model">MODEL</div>
        <div class="st st-grid"><Ic n="grid" /><Ic n="snap" /><i class="caret" /></div>
        <div class="st st-dyn"><Ic n="dyn" /></div>
        <div class="st st-ortho"><Ic n="ortho" /><Ic n="polar" /><i class="caret" /><Ic n="iso" /><i class="caret" /></div>
        <div class="st st-osnap"><Ic n="osnap" /><Ic n="dwg" /><i class="caret" /></div>
        <div class="st st-anno"><Ic n="anno" /><Ic n="anno" /><Ic n="annog" /><span class="scale">1:50</span><i class="caret" /></div>
        <div class="st st-gear"><Ic n="gear" /><i class="caret" /></div>
        <div class="st st-one"><Ic n="plus" /></div>
        <div class="st st-one"><Ic n="units" /></div>
        <div class="st st-one"><Ic n="isol" /></div>
        <div class="st st-one"><Ic n="check" s="16" /></div>
        <div class="st st-end"><Ic n="full" /><Ic n="menu" /></div>
      </div>
    </footer>
  </div>
</template>

<style>
html,
body {
  margin: 0;
  background: #333;
  overflow: hidden;
}
</style>

<style scoped>
.app {
  width: 1920px;
  height: 1040px;
  display: flex;
  flex-direction: column;
  font-family: Roboto, 'Liberation Sans', sans-serif;
  font-size: 12px;
  color: #e4e4e4;
  overflow: hidden;
}

.ic {
  flex: none;
  display: block;
}

.caret {
  display: inline-block;
  flex: none;
  width: 0;
  height: 0;
  border-left: 3px solid transparent;
  border-right: 3px solid transparent;
  border-top: 3px solid #d8d8d8;
}

.caret.dim {
  border-top-color: #888;
}

/* title bar */
.titlebar {
  position: relative;
  height: 24px;
  flex: none;
  display: flex;
  background: #6b95c0;
}

.appbtn {
  position: absolute;
  left: 0;
  top: 0;
  width: 41px;
  height: 40px;
  box-sizing: border-box;
  padding: 2px 0 0 4px;
  border: 1px solid #111;
  background: linear-gradient(#8a8a8a, #5a5a5a);
  z-index: 5;
}

.app-caret {
  position: absolute;
  right: 3px;
  top: 21px;
  border-top-color: #222;
}

.qat {
  width: 255px;
  flex: none;
  box-sizing: border-box;
  padding-left: 50px;
  display: flex;
  align-items: center;
  gap: 8px;
  background: linear-gradient(#757575, #3f3f3f);
}

.qat-g {
  display: flex;
  align-items: center;
  gap: 4px;
  margin-right: 2px;
}

.qat-menu {
  margin-left: 3px;
  width: 8px;
  border-top: 1px solid #ddd;
  padding-top: 2px;
  line-height: 0;
}

.title-text {
  margin-left: 410px;
  display: flex;
  gap: 18px;
  font-size: 15px;
  line-height: 25px;
  color: #101010;
  width: 276px;
  flex: none;
  white-space: nowrap;
}

.infocenter {
  margin-left: 410px;
  width: 447px;
  flex: none;
  display: flex;
  align-items: center;
  background: linear-gradient(#767676, #3f3f3f);
}

.ic-play {
  margin-left: 5px;
  border-left: 4px solid #eee;
  border-top: 4px solid transparent;
  border-bottom: 4px solid transparent;
}

.search {
  margin-left: 5px;
  width: 180px;
  height: 22px;
  box-sizing: border-box;
  border: 1px solid #333;
  background: #5d5d5d;
  color: #c4c4c4;
  font-style: italic;
  font-size: 11.5px;
  line-height: 20px;
  padding-left: 3px;
}

.ml-binoc {
  margin-left: 5px;
}

.ml-user {
  margin-left: 7px;
}

.signin {
  margin-left: 5px;
  font-size: 13px;
  width: 50px;
}

.signin-caret {
  margin-left: 35px;
}

.ml-x {
  margin-left: 10px;
}

.ml-a {
  margin-left: 8px;
}

.ml-help {
  margin-left: 17px;
  margin-right: 6px;
}

.ml-a + .caret {
  margin-left: 3px;
}

.winctl {
  flex: 1;
  position: relative;
}

.w-min {
  position: absolute;
  left: 30px;
  top: 13px;
  width: 8px;
  height: 2px;
  background: #222;
}

.w-max {
  position: absolute;
  left: 55px;
  top: 6px;
  width: 7px;
  height: 7px;
  border: 1px solid #222;
  box-shadow: 2px -2px 0 -1px #222;
}

.w-close {
  position: absolute;
  left: 75px;
  top: 0;
  width: 45px;
  height: 19px;
  line-height: 19px;
  text-align: center;
  font-size: 11px;
  color: #fff;
  background: #c75050;
}

/* ribbon */
.rtabs {
  height: 20px;
  flex: none;
  display: flex;
  align-items: flex-end;
  box-sizing: border-box;
  padding-left: 47px;
  background: #454545;
  border-top: 1px solid #2e2e2e;
  border-bottom: 1px solid #2e2e2e;
}

.rtab {
  padding: 1px 9.5px 0;
  line-height: 17px;
  color: #c8c8c8;
  white-space: nowrap;
}

.rtab.on {
  background: #4f4f4f;
  color: #f4f4f4;
  border: 1px solid #2e2e2e;
  border-bottom: 0;
  padding: 0 8.5px;
}

.rtab-view {
  margin-left: 14px;
  height: 17px;
  display: flex;
  align-items: center;
  gap: 4px;
}

.view-pill {
  width: 13px;
  height: 7px;
  border-radius: 2px;
  background: #e4e4e4;
}

.ribbon {
  height: 100px;
  flex: none;
  display: flex;
  box-sizing: border-box;
  border-bottom: 1px solid #8c8c8c;
  background: #3a3a3a;
}

.panel {
  flex: none;
  display: flex;
  flex-direction: column;
  box-sizing: border-box;
  border-right: 1px solid #343434;
  background: linear-gradient(#4b4b4b, #454545);
}

.panel-body {
  height: 80px;
  display: flex;
  box-sizing: border-box;
  padding-top: 5px;
}

.panel-title {
  position: relative;
  height: 19px;
  box-sizing: border-box;
  padding-bottom: 2px;
  display: flex;
  align-items: center;
  justify-content: center;
  gap: 5px;
  background: linear-gradient(#3f3f3f, #454545);
  color: #e2e2e2;
}

.title-caret {
  border-left-width: 4px;
  border-right-width: 4px;
  border-top-width: 4px;
}

.launcher {
  position: absolute;
  right: 4px;
  top: 6px;
}

.ribbon-rest {
  flex: 1;
  background: linear-gradient(100deg, #474747, #2f2f2f);
}

.big {
  flex: none;
  display: flex;
  flex-direction: column;
  align-items: center;
  padding-top: 2px;
}

.big-glyph {
  height: 32px;
  font-size: 41px;
  font-weight: 300;
  line-height: 32px;
  color: #dcdcdc;
}

.big-label {
  margin-top: 5px;
  line-height: 15px;
  text-align: center;
  white-space: nowrap;
}

.big-caret {
  margin-top: 4px;
}

.col {
  flex: none;
  box-sizing: border-box;
}

.row {
  height: 24px;
  display: flex;
  align-items: center;
}

.row.active {
  width: 24px;
  height: 23px;
  margin-left: -4px;
  padding-left: 3px;
  box-sizing: border-box;
  background: #4a6ea5;
  border: 1px solid #35507d;
}

.row-label {
  margin-left: 5px;
  white-space: nowrap;
}

.row-caret {
  margin-left: auto;
}

.layers {
  width: 209px;
  flex: none;
}

.combo {
  position: relative;
  height: 21px;
  box-sizing: border-box;
  display: flex;
  align-items: center;
  border: 1px solid #2a2a2a;
  background: linear-gradient(#555, #424242);
  white-space: nowrap;
}

.layer-combo {
  width: 208px;
  margin-top: 1px;
  padding-left: 4px;
  gap: 2px;
  margin-bottom: 1px;
}

.layer-row {
  height: 24px;
  display: flex;
  align-items: center;
  gap: 8px;
  padding-left: 4px;
}

.layer-row .row-label {
  margin-left: -4px;
}

.swatch {
  width: 14px;
  height: 14px;
  background: #fff;
  border: 1px solid #222;
  margin-left: 3px;
}

.layer-name {
  margin-left: 5px;
  color: #dfe6f0;
}

.combo-caret {
  position: absolute;
  right: 5px;
  top: 8px;
  border-left-width: 4px;
  border-right-width: 4px;
  border-top-width: 4px;
  border-top-color: #eee;
}

.props {
  flex: none;
  width: 198px;
}

.prop-row {
  height: 24px;
  display: flex;
  align-items: center;
  gap: 1px;
}

.prop-row .combo {
  width: 180px;
}

.swatch-lg {
  width: 15px;
  height: 15px;
  margin-left: 12px;
}

.bylayer {
  margin-left: 10px;
}

.lt-line {
  width: 57px;
  height: 1px;
  background: #eee;
  margin: 0 3px 0 9px;
}

/* file tabs */
.ftabs {
  height: 29px;
  flex: none;
  box-sizing: border-box;
  display: flex;
  align-items: flex-end;
  padding: 0 0 0 20px;
  background: #2f2f2f;
  border-bottom: 4px solid #5f5f5f;
}

.ftab {
  width: 124px;
  height: 22px;
  margin-right: -1px;
  box-sizing: border-box;
  display: flex;
  align-items: center;
  justify-content: space-between;
  padding: 0 13px 0 12px;
  border-radius: 9px 9px 0 0;
  background: linear-gradient(#525252, #444);
  color: #a4a4a4;
  border-right: 1px solid #333;
}

.ftab.on {
  background: linear-gradient(#6a6a6a, #4f4f4f);
  color: #f2f2f2;
}

.ftab-x {
  font-size: 10px;
  color: #707070;
}

.ftab-add {
  width: 21px;
  height: 16px;
  margin: 0 0 3px 8px;
  line-height: 16px;
  text-align: center;
  font-size: 15px;
  font-weight: 700;
  color: #bdbdbd;
  background: #4a4a4a;
  border-radius: 4px;
}

/* workspace */
.workspace {
  flex: 1;
  min-height: 0;
  display: flex;
  background: #5f5f5f;
}

.palette {
  position: relative;
  width: 212px;
  flex: none;
  display: flex;
  overflow: hidden;
}

.pal-main {
  width: 188px;
  flex: none;
}

.pal-head {
  margin-top: 3px;
  height: 26px;
  box-sizing: border-box;
  padding: 1px 0 0 15px;
  line-height: 26px;
  font-size: 14.5px;
  color: #eee;
  background: #525252;
  border-radius: 3px 3px 0 0;
}

.pal-list {
  box-sizing: border-box;
  padding: 15px 0 0 23px;
}

.tool {
  height: 40px;
  margin-bottom: 11px;
  display: flex;
  align-items: center;
  gap: 5px;
  color: #f0f0f0;
  white-space: nowrap;
}

.tile {
  width: 40px;
  height: 40px;
  flex: none;
  box-sizing: border-box;
  display: flex;
  align-items: center;
  justify-content: center;
  border: 2px solid #445e92;
  border-radius: 6px;
  background: #505050;
  font: 700 20px 'Liberation Sans', sans-serif;
  color: #d8d8d8;
  text-shadow: 1px 1px 1px #222;
}

.cap {
  margin: 16px 0 16px -7px;
  line-height: 16px;
  color: #b6b6b6;
  white-space: nowrap;
}

.cap-iso {
  margin-top: 20px;
}

.pal-rule {
  height: 1px;
  margin: 16px 5px 0 -7px;
  background: #f0f0f0;
}

.pal-tabs {
  padding-top: 29px;
  width: 20px;
  flex: none;
}

.vtab {
  box-sizing: border-box;
  display: flex;
  align-items: center;
  justify-content: center;
  padding-right: 3px;
  writing-mode: vertical-rl;
  white-space: nowrap;
  transform: rotate(180deg);
  color: #adadad;
  background: #565656;
  border: 1px solid #3c3c3c;
  border-left-color: #333;
  border-radius: 3px 0 0 3px;
}

.vtab.on {
  background: #5f5f5f;
  color: #f2f2f2;
  border-color: #5f5f5f;
  border-left-color: #3c3c3c;
}

.pal-scroll {
  position: absolute;
  left: 3px;
  top: 284px;
  width: 4px;
  height: 405px;
  border-radius: 2px;
  background: #4a4a4a;
}

.work-right {
  flex: 1;
  min-width: 0;
  display: flex;
  flex-direction: column;
}

.work-top {
  position: relative;
  height: 782px;
  flex: none;
  display: flex;
}

.strip-wrap {
  width: 28px;
  flex: none;
  padding-top: 4px;
}

.strip {
  width: 24px;
  height: 313px;
  box-sizing: border-box;
  display: flex;
  flex-direction: column;
  align-items: center;
  background: #565656;
  border: 1px solid #404040;
}

.strip-handle {
  width: 14px;
  height: 3px;
  margin: 3px 0 2px;
  flex: none;
  background-image: radial-gradient(#d0d0d0 0.5px, transparent 0.5px);
  background-size: 2px 2px;
}

.strip-btn {
  height: 22px;
  flex: none;
  display: flex;
  align-items: center;
  justify-content: center;
}

.strip-t {
  width: 16px;
  height: 16px;
  display: flex;
  align-items: center;
  justify-content: center;
  background: #3d6cb0;
  color: #dbe6f6;
  font: 700 12.5px 'Liberation Sans', sans-serif;
  letter-spacing: -0.4px;
}

.strip-t.dark {
  color: #08163a;
}

.strip-t.tiny {
  font-size: 9px;
}

.strip-sep {
  width: 19px;
  height: 1px;
  margin: 3px 0;
  flex: none;
  background: #e8e8e8;
}

.strip-btn.gear {
  width: 22px;
  height: 18px;
  margin-bottom: 2px;
  box-sizing: border-box;
  border: 1px solid #3f5f96;
  background: #4a5f80;
}

.canvas {
  position: relative;
  flex: 1;
  min-width: 0;
  background: #23282f;
  overflow: hidden;
}

.drawing {
  position: absolute;
  left: 0;
  top: 0;
}

.vp-label {
  position: absolute;
  left: 4px;
  top: 8px;
  color: #dedede;
  font-size: 12.3px;
}

.vp-ctl {
  position: absolute;
  left: 1615px;
  top: 11px;
  width: 50px;
  height: 10px;
}

.vp-min {
  position: absolute;
  left: 0;
  top: 7px;
  width: 10px;
  height: 2px;
  background: #eee;
}

.vp-max {
  position: absolute;
  left: 20px;
  top: 0;
  width: 9px;
  height: 9px;
  box-sizing: border-box;
  border: 2px solid #eee;
}

.vp-close {
  position: absolute;
  left: 39px;
  top: -3px;
  font-size: 11px;
  font-weight: 700;
  color: #f0f0f0;
}

.navbar {
  position: absolute;
  left: 1640px;
  top: 28px;
  width: 32px;
  height: 240px;
  box-sizing: border-box;
  padding: 17px 0 0;
  display: flex;
  flex-direction: column;
  align-items: center;
  gap: 5px;
  border-radius: 4px;
  background: #50565c;
}

.nav-dot {
  width: 4px;
  height: 2px;
  background: #3f444b;
}

.canvas-edge {
  position: absolute;
  right: 0;
  top: 0;
  bottom: 0;
  width: 5px;
  background: #42464c;
}

.logo {
  position: absolute;
  right: 0;
  top: 518px;
  width: 467px;
  height: 179px;
  box-sizing: border-box;
  padding-left: 9px;
  display: flex;
  align-items: center;
  background: #fff;
}

.logo-mark {
  width: 160px;
  height: 160px;
  box-sizing: border-box;
  display: flex;
  align-items: baseline;
  justify-content: center;
  padding-top: 34px;
  border: 10px solid #1c3f6e;
  border-radius: 9px;
  box-shadow: 1px 3px 4px rgba(0, 0, 0, 0.45), inset 0 3px 4px rgba(0, 0, 0, 0.25);
  font-family: Roboto, sans-serif;
  font-weight: 900;
  line-height: 1;
  text-shadow: 2px 3px 4px rgba(0, 0, 0, 0.35);
}

.logo-e {
  font-size: 98px;
  color: #20102e;
}

.logo-p {
  font-size: 63px;
  color: #1c3f6e;
}

.logo-div {
  width: 2px;
  height: 70px;
  margin-left: 30px;
  background: #111;
}

.logo-text {
  margin-left: 20px;
  white-space: nowrap;
}

.logo-l1 {
  font-size: 41px;
  font-weight: 300;
  line-height: 44px;
  color: #15152a;
}

.logo-l2 {
  font-size: 34.5px;
  font-weight: 400;
  line-height: 39px;
  color: #1c3f6e;
}

.cursor {
  position: absolute;
  left: 20px;
  top: 50px;
}

.cmd {
  margin-top: 3px;
  height: 52px;
  flex: none;
  display: flex;
}

.cmd-side {
  width: 21px;
  flex: none;
  display: flex;
  flex-direction: column;
  align-items: center;
  background: #4a4a4a;
}

.cmd-handle {
  width: 14px;
  height: 5px;
  margin-top: 3px;
  background-image: radial-gradient(#cfcfcf 0.5px, transparent 0.5px);
  background-size: 2px 2px;
}

.cmd-x {
  margin-top: 5px;
  font-size: 11px;
  font-weight: 700;
  line-height: 16px;
  color: #f2f2f2;
}

.cmd-main {
  flex: 1;
  display: flex;
  flex-direction: column;
}

.cmd-hist {
  height: 30px;
  box-sizing: border-box;
  padding: 13px 0 0 3px;
  background: #c6c6c6;
  border-bottom: 1px solid #8a8a8a;
  font: 11.5px/15px 'DejaVu Sans Mono', monospace;
  color: #111;
}

.cmd-input {
  height: 22px;
  display: flex;
  align-items: center;
  padding-left: 7px;
  background: #fff;
  font: italic 11.5px 'DejaVu Sans Mono', monospace;
  color: #8a8a8a;
}

.cmd-caret {
  margin: 0 7px 0 5px;
  border-top-color: #888;
}

/* bottom bar */
.bottom {
  height: 30px;
  flex: none;
  display: flex;
  background: #363636;
}

.ltabs {
  display: flex;
  align-items: flex-start;
  padding-left: 15px;
  gap: 5px;
}

.ltab {
  height: 18px;
  line-height: 18px;
  padding: 0 9px;
  background: #4e4e4e;
  border-radius: 0 0 6px 6px;
  color: #9e9e9e;
}

.ltab.on {
  background: #5e5e5e;
  color: #f4f4f4;
  font-weight: 700;
}

.ltab-add {
  width: 20px;
  height: 18px;
  margin-left: 2px;
  line-height: 18px;
  text-align: center;
  font-size: 15px;
  font-weight: 700;
  color: #bcbcbc;
  background: #4e4e4e;
  border-radius: 0 0 6px 6px;
}

.status {
  margin-left: auto;
  width: 790px;
  display: flex;
  padding-top: 1px;
  height: 28px;
}

.st {
  height: 28px;
  box-sizing: border-box;
  flex: none;
  display: flex;
  align-items: center;
  justify-content: center;
  gap: 6px;
  border: 1px solid #555;
  border-left-color: #666;
  background: #414141;
  white-space: nowrap;
}

.st .caret {
  border-left-width: 3.5px;
  border-right-width: 3.5px;
  border-top-width: 4px;
}

.st-url {
  width: 163px;
  font-size: 12px;
  color: #f2f2f2;
}

.st-model {
  width: 51px;
}

.st-grid {
  width: 66px;
}

.st-dyn {
  width: 25px;
}

.st-ortho {
  width: 103px;
}

.st-osnap {
  width: 66px;
}

.st-anno {
  width: 117px;
  gap: 3px;
}

.scale {
  margin-left: 6px;
}

.st-gear {
  width: 40px;
}

.st-one {
  width: 26.5px;
}

.st-end {
  width: 54px;
  gap: 10px;
}
</style>
